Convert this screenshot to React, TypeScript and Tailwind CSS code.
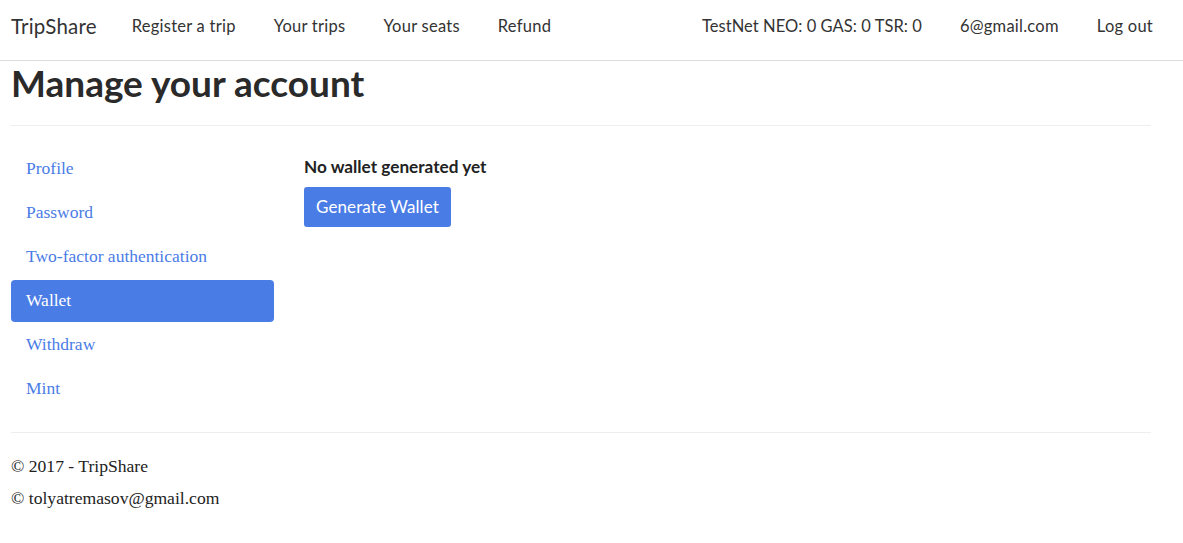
import React from "react";

const sideLinks = ["Profile", "Password", "Two-factor authentication", "Wallet", "Withdraw", "Mint"];

function Navbar() {
  return (
    <nav className="h-[61px] border-b border-[#dddddd] bg-white font-['Lato',sans-serif] text-[#333]">
      <div className="flex h-[53px] items-center px-[11px] text-[16.5px] tracking-[0.25px]">
        <span className="mr-[35px] text-[20.5px] tracking-[0.2px]">TripShare</span>
        <div className="flex gap-[38px]">
          <span>Register a trip</span>
          <span>Your trips</span>
          <span>Your seats</span>
          <span>Refund</span>
        </div>
        <div className="ml-auto flex gap-[38px] pr-[19px]">
          <span className="tracking-[0.05px]">TestNet NEO: 0 GAS: 0 TSR: 0</span>
          <span>6@gmail.com</span>
          <span>Log out</span>
        </div>
      </div>
    </nav>
  );
}

export default function App() {
  return (
    <div className="min-h-[543px] bg-white font-['Liberation_Serif',serif] text-[#222]">
      <Navbar />
      <main className="w-[1140px] pl-[11px] box-content">
        <h1 className="mt-[2px] font-['Lato',sans-serif] text-[37px] font-bold leading-[40px] text-[#2a2a2a]">
          Manage your account
        </h1>
        <hr className="mt-[22px] border-[#eeeeee]" />
        <div className="mt-[22px] flex">
          <ul className="flex w-[263px] flex-col gap-[2px]">
            {sideLinks.map((l) => (
              <li
                key={l}
                className={
                  l === "Wallet"
                    ? "h-[42px] rounded-[4px] bg-[#4a7ce6] px-[15px] pb-[2px] text-[17.5px] leading-[40px] text-white"
                    : "h-[42px] px-[15px] pb-[2px] text-[17.5px] leading-[40px] text-[#4a7ce6]"
                }
              >
                {l}
              </li>
            ))}
          </ul>
          <div className="ml-[30px] font-['Lato',sans-serif]">
            <p className="mt-[9px] text-[17.2px] font-bold leading-[20px] text-[#222]">No wallet generated yet</p>
            <button className="mt-[10px] h-[40px] rounded-[3px] bg-[#4a7ce6] px-[12px] text-[17px] tracking-[0.1px] text-white">
              Generate Wallet
            </button>
          </div>
        </div>
        <hr className="mt-[22px] border-[#eeeeee]" />
        <footer className="pt-[17px] text-[17.6px] leading-[32px]">
          <p>© 2017 - TripShare</p>
          <p>© tolyatremasov@gmail.com</p>
        </footer>
      </main>
    </div>
  );
}
